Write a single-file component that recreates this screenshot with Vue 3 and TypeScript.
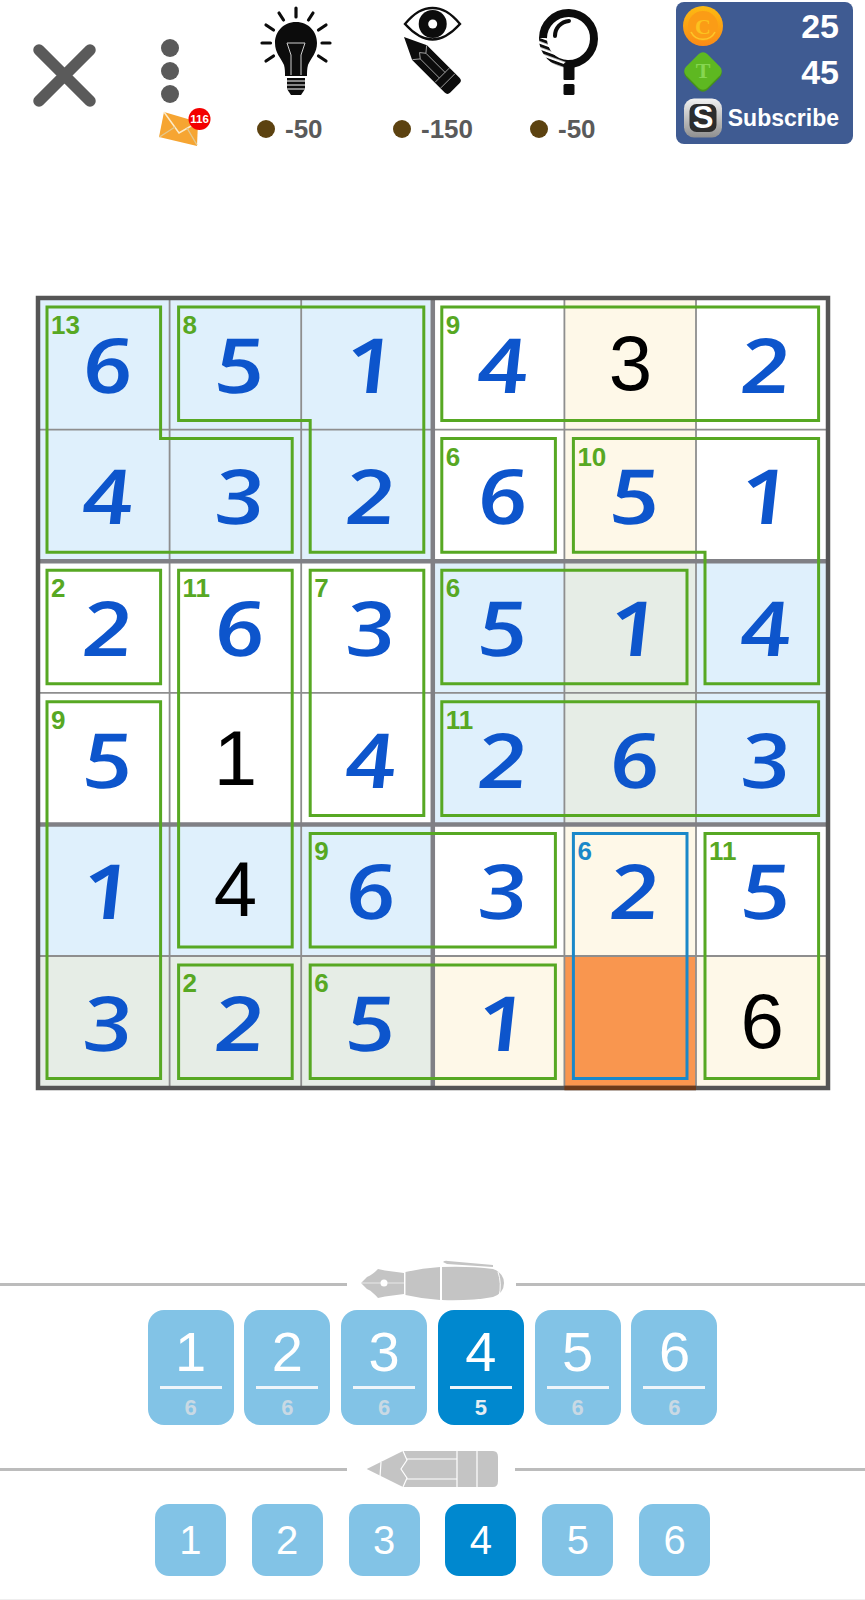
<template>
  <div class="page">
    <header class="header">
      <div class="close">
        <svg width="64" height="66" viewBox="0 0 64 66">
          <path d="M6 7 L57 58 M57 7 L6 58" stroke="#5a5a5a" stroke-width="11.5" stroke-linecap="round" fill="none" />
        </svg>
      </div>
      <div class="menu">
        <svg width="70" height="146" viewBox="0 0 70 146">
          <circle cx="20" cy="48" r="9" fill="#5a5a5a" />
          <circle cx="20" cy="71" r="9" fill="#5a5a5a" />
          <circle cx="20" cy="94" r="9" fill="#5a5a5a" />
          <path d="M14 112 L48 122 L47 146 L9 137 Z" fill="#f6a532" />
          <path d="M14 112 L29 133 L48 122" stroke="#fcebc8" stroke-width="1.5" fill="none" />
          <path d="M9.5 137 L25 127 M47 145 L37 128" stroke="#e3c88e" stroke-width="1.4" fill="none" />
          <circle cx="49.5" cy="119" r="11" fill="#f30000" />
          <text x="49.5" y="123" class="badge">116</text>
        </svg>
      </div>

      <div class="tool tool-bulb">
        <svg width="100" height="105" viewBox="0 0 100 105">
          <path d="M50 22 C37 22 29 32 29 43 C29 53 35 58 38 65 C39 69 39 72 39 76 L61 76 C61 72 61 69 62 65 C65 58 71 53 71 43 C71 32 63 22 50 22 Z" fill="#0c0c0c" />
          <path d="M41 43 L59 43 L55 55 L55 75 M41 43 L45 55 L45 75" stroke="#cfcfcf" stroke-width="1" fill="none" />
          <path d="M41 78 H59 V89 L55 95 H45 L41 89 Z" fill="#0c0c0c" />
          <path d="M41 81 H59 M41 85 H59 M41 89 H59" stroke="#fff" stroke-width="1" />
          <path
            d="M50 8 V17 M33 13 L37.5 20 M67 13 L62.5 20 M20 25 L27.5 30 M80 25 L72.5 30 M16 43 H24.5 M76 43 H84 M20 61 L27.5 56 M80 61 L72.5 56"
            stroke="#0c0c0c" stroke-width="3.2" stroke-linecap="round" fill="none" />
        </svg>
        <div class="cost"><i class="dot"></i>-50</div>
      </div>

      <div class="tool tool-eye">
        <svg width="80" height="105" viewBox="0 0 80 105">
          <path d="M10 24 C20 12 28 8 37.5 8 C47 8 55 12 65 24 C55 35 47 39.5 37.5 39.5 C28 39.5 20 35 10 24 Z" fill="#fff" stroke="#0c0c0c" stroke-width="2.4" />
          <circle cx="37.7" cy="24" r="14" fill="#0c0c0c" />
          <circle cx="37.7" cy="24" r="4.5" fill="#fff" />
          <g transform="translate(9 37) rotate(45)">
            <path d="M0 0 L22 -10.5 H68 Q72 -10.5 72 -6.5 V6.5 Q72 10.5 68 10.5 H22 Z" fill="#0c0c0c" />
            <path d="M22 -10 L27 -4 L22 0 L27 4 L22 10 M27 -4 H54 M27 4 H54 M54 -10 V10 M62 -10 V10" stroke="#b8b8b8" stroke-width="0.8" fill="none" />
          </g>
        </svg>
        <div class="cost"><i class="dot"></i>-150</div>
      </div>

      <div class="tool tool-glass">
        <svg width="80" height="105" viewBox="0 0 80 105">
          <defs>
            <pattern id="hatch" width="5.4" height="5.4" patternUnits="userSpaceOnUse" patternTransform="rotate(20)">
              <rect width="5.4" height="3" fill="#0c0c0c" />
            </pattern>
          </defs>
          <path d="M13 38 A25.5 25.5 0 1 1 38 64" fill="none" stroke="#0c0c0c" stroke-width="8" />
          <path d="M13 38 A25.5 25.5 0 0 0 38 64" fill="none" stroke="url(#hatch)" stroke-width="8" />
          <path d="M25 36 A15 15 0 0 1 39 21" fill="none" stroke="#0c0c0c" stroke-width="4" stroke-linecap="round" />
          <path d="M33.5 64 L38 60 L44.5 64 V79 Q44.5 80 43.5 80 H34.5 Q33.5 80 33.5 79 Z" fill="#0c0c0c" />
          <rect x="33.5" y="84" width="11" height="11" rx="1.5" fill="#0c0c0c" />
        </svg>
        <div class="cost"><i class="dot"></i>-50</div>
      </div>

      <div class="wallet">
        <div class="wallet-row">
          <svg width="40" height="44" viewBox="0 0 40 44">
            <defs>
              <linearGradient id="coinFill" x1="0" y1="0" x2="0" y2="1">
                <stop offset="0" stop-color="#fdbb12" />
                <stop offset="1" stop-color="#fb8a16" />
              </linearGradient>
            </defs>
            <circle cx="20" cy="22" r="20" fill="url(#coinFill)" />
            <circle cx="20" cy="22" r="15" fill="#fb9c16" />
            <path d="M8 28 A13.5 13.5 0 0 0 32 28" stroke="#fdc72a" stroke-width="1.6" fill="none" />
            <text x="20" y="29.5" class="coin-letter" fill="#fcc21f">C</text>
          </svg>
          <span class="amount">25</span>
        </div>
        <div class="wallet-row">
          <svg width="40" height="44" viewBox="0 0 40 44">
            <rect x="5" y="8" width="30" height="30" rx="6" fill="#47921a" transform="rotate(45 20 23)" />
            <rect x="5" y="6" width="30" height="30" rx="6" fill="#5eb821" transform="rotate(45 20 21)" />
            <text x="20" y="28" class="coin-letter" fill="#86d651">T</text>
          </svg>
          <span class="amount">45</span>
        </div>
        <div class="wallet-row">
          <svg width="40" height="44" viewBox="0 0 40 44">
            <defs>
              <linearGradient id="chrome" x1="0" y1="0" x2="0" y2="1">
                <stop offset="0" stop-color="#f2f2f2" />
                <stop offset="1" stop-color="#8f8f8f" />
              </linearGradient>
            </defs>
            <rect x="1" y="2.5" width="38" height="39" rx="10" fill="url(#chrome)" />
            <rect x="6.5" y="8" width="27" height="28" rx="7" fill="#2c2c2c" />
            <text x="20" y="31.5" class="s-letter">S</text>
          </svg>
          <span class="subscribe">Subscribe</span>
        </div>
      </div>
    </header>

    <section class="board">
      <div v-for="(cell, i) in cells" :key="i" class="cell" :class="cell.tone">
        <span :class="cell.given ? 'given' : 'entered'">{{ cell.value }}</span>
      </div>
      <svg class="overlay" viewBox="0 0 790 790" width="790" height="790">
        <path v-for="n in [1, 2, 4, 5]" :key="'v' + n" :d="`M${n * unit} 0 V790`" class="thin" />
        <path v-for="n in [1, 3, 5]" :key="'h' + n" :d="`M0 ${n * unit} H790`" class="thin" />
        <path :d="`M${3 * unit} 0 V790`" class="thick" />
        <path :d="`M0 ${2 * unit} H790 M0 ${4 * unit} H790`" class="thick" />
        <rect x="0" y="0" width="790" height="790" class="frame" />
        <path :d="`M${4 * unit} 790 H${5 * unit}`" class="frame-hot" />
        <g v-for="(cage, i) in outlines" :key="'c' + i">
          <polygon :points="cage.points" class="cage" :class="{ active: cage.active }" />
          <text :x="cage.x" :y="cage.y" class="sum" :class="{ active: cage.active }">{{ cage.sum }}</text>
        </g>
      </svg>
    </section>

    <div class="rule pen-rule">
      <span class="line first"></span>
      <svg class="pen" width="160" height="52" viewBox="0 3 160 52">
        <path d="M6 28 L12 22 C17 20 20 17 23 14 L30 15.5 L49 18 V39 L30 41.5 L23 43 C20 40 17 36 12 34 Z" fill="#c4c4c4" />
        <path d="M6 28 H49" stroke="#f2f2f2" stroke-width="0.8" />
        <circle cx="29" cy="28" r="3.5" fill="#fff" />
        <path d="M50.5 17 Q68 13 85 12 V45 Q68 44 50.5 40 Z" fill="#c4c4c4" />
        <path d="M87 12 Q115 11 138 14 Q149 18 149 28 Q149 38 138 42 Q115 46 87 45 Z" fill="#c4c4c4" />
        <path d="M88 7 Q90 5 93 6 L138 10 L138 12 L92 9 Z" fill="#c4c4c4" />
        <path d="M143 17 Q147 28 144 42" stroke="#fff" stroke-width="1" fill="none" />
      </svg>
      <span class="line"></span>
    </div>
    <div class="pad pen-pad">
      <div v-for="key in penKeys" :key="key.digit" class="key" :class="{ on: key.digit === 4 }">
        <span class="key-digit">{{ key.digit }}</span>
        <i class="key-bar"></i>
        <span class="key-count">{{ key.left }}</span>
      </div>
    </div>

    <div class="rule pencil-rule">
      <span class="line first"></span>
      <svg class="pencil" width="150" height="50" viewBox="0 -1 150 50">
        <path d="M6.7 24 L43 6 H133 Q138 6 138 12 V36 Q138 42 133 42 H43 Z" fill="#c4c4c4" />
        <path d="M21 17 L20 32 M43 6 L47 15 L41 24 L47 33 L43 42 M47 14 H97 M47 34 H97 M97 6 V42 M117 6 V42" stroke="#fff" stroke-width="1.2" fill="none" />
      </svg>
      <span class="line"></span>
    </div>
    <div class="pad pencil-pad">
      <div v-for="n in 6" :key="n" class="key small-key" :class="{ on: n === 4 }">{{ n }}</div>
    </div>
  </div>
</template>

<script setup lang="ts">
interface Cell {
  value: string;
  tone: string;
  given: boolean;
}
interface Cage {
  sum: number;
  corners: number[][];
  active?: boolean;
}

const unit = 131.6;
const inset = 9;

const digits = ['651432', '432651', '263514', '514263', '146325', '325106'];
const tones = ['bbbwyw', 'bbbwyw', 'wwwbgb', 'wwwbgb', 'bbbwyw', 'gggyoy'];
const givenCells = new Set(['0-4', '3-1', '4-1', '5-5']);

const cells: Cell[] = digits.flatMap((row, r) =>
  row.split('').map((d, c) => ({
    value: d === '0' ? '' : d,
    tone: 'tone-' + tones[r][c],
    given: givenCells.has(`${r}-${c}`),
  })),
);

// corners run clockwise as [col, row], starting from the cage's top left
const cages: Cage[] = [
  { sum: 13, corners: [[0, 0], [1, 0], [1, 1], [2, 1], [2, 2], [0, 2]] },
  { sum: 8, corners: [[1, 0], [3, 0], [3, 2], [2, 2], [2, 1], [1, 1]] },
  { sum: 9, corners: [[3, 0], [6, 0], [6, 1], [3, 1]] },
  { sum: 6, corners: [[3, 1], [4, 1], [4, 2], [3, 2]] },
  { sum: 10, corners: [[4, 1], [6, 1], [6, 3], [5, 3], [5, 2], [4, 2]] },
  { sum: 2, corners: [[0, 2], [1, 2], [1, 3], [0, 3]] },
  { sum: 11, corners: [[1, 2], [2, 2], [2, 5], [1, 5]] },
  { sum: 7, corners: [[2, 2], [3, 2], [3, 4], [2, 4]] },
  { sum: 6, corners: [[3, 2], [5, 2], [5, 3], [3, 3]] },
  { sum: 11, corners: [[3, 3], [6, 3], [6, 4], [3, 4]] },
  { sum: 9, corners: [[0, 3], [1, 3], [1, 6], [0, 6]] },
  { sum: 9, corners: [[2, 4], [4, 4], [4, 5], [2, 5]] },
  { sum: 6, corners: [[4, 4], [5, 4], [5, 6], [4, 6]], active: true },
  { sum: 11, corners: [[5, 4], [6, 4], [6, 6], [5, 6]] },
  { sum: 2, corners: [[1, 5], [2, 5], [2, 6], [1, 6]] },
  { sum: 6, corners: [[2, 5], [4, 5], [4, 6], [2, 6]] },
];

function shrink(corners: number[][]) {
  const n = corners.length;
  return corners.map((p, i) => {
    const prev = corners[(i + n - 1) % n];
    const next = corners[(i + 1) % n];
    const inDir = [Math.sign(p[0] - prev[0]), Math.sign(p[1] - prev[1])];
    const outDir = [Math.sign(next[0] - p[0]), Math.sign(next[1] - p[1])];
    return [
      p[0] * unit + (-inDir[1] - outDir[1]) * inset,
      p[1] * unit + (inDir[0] + outDir[0]) * inset,
    ];
  });
}

const outlines = cages.map((cage) => {
  const pts = shrink(cage.corners);
  return {
    sum: cage.sum,
    active: cage.active,
    points: pts.map((p) => p.join(',')).join(' '),
    x: pts[0][0] + 4,
    y: pts[0][1] + 27,
  };
});

const penKeys = [1, 2, 3, 4, 5, 6].map((digit) => ({ digit, left: digit === 4 ? 5 : 6 }));
</script>

<style scoped>
.page {
  width: 865px;
  height: 1600px;
  box-sizing: border-box;
  border-bottom: 1px solid #eeeeee;
  background: #fff;
  font-family: "Liberation Sans", Arial, sans-serif;
  overflow: hidden;
}

.header {
  height: 146px;
  display: flex;
  align-items: flex-start;
  padding-left: 33px;
  box-sizing: border-box;
}

.close {
  width: 117px;
  padding-top: 43px;
}

.menu {
  width: 96px;
}

.badge {
  font-size: 11.5px;
  font-weight: 700;
  fill: #fff;
  text-anchor: middle;
}

.tool-bulb {
  width: 147px;
}

.tool-eye {
  width: 137px;
}

.tool-glass {
  width: 146px;
}

.tool svg {
  display: block;
}

.tool-bulb .cost {
  padding-left: 11px;
}

.cost {
  display: flex;
  align-items: center;
  gap: 10px;
  margin-top: 11px;
  height: 26px;
  font-size: 26px;
  font-weight: 700;
  color: #5a5a5a;
}

.tool-eye svg {
  margin-left: 2px;
}

.dot {
  width: 18px;
  height: 18px;
  border-radius: 50%;
  background: #5c4210;
}

.wallet {
  width: 177px;
  height: 142px;
  margin-top: 2px;
  padding: 1px 14px 0 7px;
  box-sizing: border-box;
  border-radius: 8px;
  background: #3f5b92;
  color: #fff;
}

.wallet-row {
  display: flex;
  align-items: center;
  justify-content: space-between;
  height: 46px;
}

.amount {
  font-size: 34px;
  font-weight: 700;
}

.subscribe {
  font-size: 23px;
  font-weight: 700;
}

.coin-letter {
  font-family: "Liberation Serif", serif;
  font-size: 22px;
  font-weight: 700;
  text-anchor: middle;
}

.s-letter {
  font-family: "Liberation Sans", sans-serif;
  font-size: 31px;
  font-weight: 700;
  fill: #fff;
  text-anchor: middle;
}

.board {
  position: relative;
  width: 790px;
  height: 790px;
  margin: 151.5px 0 0 38px;
  display: grid;
  grid-template-columns: repeat(6, 1fr);
  grid-template-rows: repeat(6, 1fr);
}

.cell {
  display: flex;
  align-items: center;
  justify-content: center;
}

.entered {
  display: inline-block;
  font-family: "Open Sans", sans-serif;
  font-style: italic;
  font-weight: 600;
  font-size: 76px;
  color: #0d55cc;
  transform: translateX(2px) scaleX(1.2) skewX(7deg);
}

.given {
  font-family: "Liberation Sans", sans-serif;
  font-size: 78px;
  color: #000;
}

.tone-w {
  background: #fff;
}

.tone-b {
  background: #dff0fc;
}

.tone-y {
  background: #fef8e8;
}

.tone-g {
  background: #e6ede6;
}

.tone-o {
  background: #f9964f;
}

.overlay {
  position: absolute;
  left: 0;
  top: 0;
  overflow: visible;
}

.thin {
  stroke: #8e8e8e;
  stroke-width: 1.8;
  fill: none;
}

.thick {
  stroke: #808085;
  stroke-width: 4.5;
  fill: none;
}

.frame {
  stroke: #555555;
  stroke-width: 4.5;
  fill: none;
}

.frame-hot {
  stroke: #6b3a1a;
  stroke-width: 4.5;
  fill: none;
}

.cage {
  stroke: #57a823;
  stroke-width: 3;
  fill: none;
}

.cage.active {
  stroke: #1a88c9;
}

.sum {
  font-size: 26px;
  font-weight: 700;
  fill: #57a823;
}

.sum.active {
  fill: #1a88c9;
}

.rule {
  display: flex;
  align-items: center;
}

.pen-rule {
  margin-top: 170.5px;
  height: 52px;
}

.pencil-rule {
  margin-top: 19px;
  height: 50px;
}

.line {
  flex: 1;
  height: 3px;
  background: #bcbcbc;
}

.line.first {
  flex: 0 0 347px;
}

.pen {
  margin: 0 1px 0 8px;
}

.pencil {
  margin: 0 5px 0 13px;
}

.pad {
  display: flex;
  justify-content: center;
}

.pen-pad {
  gap: 10.8px;
}

.pencil-pad {
  gap: 25.9px;
  margin-top: 10px;
}

.key {
  width: 86px;
  height: 115px;
  border-radius: 16px;
  background: #82c3e6;
  color: #fff;
  display: flex;
  flex-direction: column;
  text-align: center;
}

.key.on {
  background: #0088cf;
}

.key-digit {
  height: 76px;
  flex: none;
  line-height: 84px;
  font-size: 56px;
}

.key-bar {
  height: 3px;
  flex: none;
  margin: 0 12px;
  background: #eef5fa;
}

.key-count {
  flex: none;
  height: 36px;
  line-height: 38px;
  font-size: 22px;
  font-weight: 700;
  color: #c9d9e4;
}

.key.on .key-count {
  color: #e4edf3;
}

.small-key {
  width: 71px;
  height: 72px;
  border-radius: 14px;
  line-height: 72px;
  font-size: 40px;
  display: block;
}
</style>
